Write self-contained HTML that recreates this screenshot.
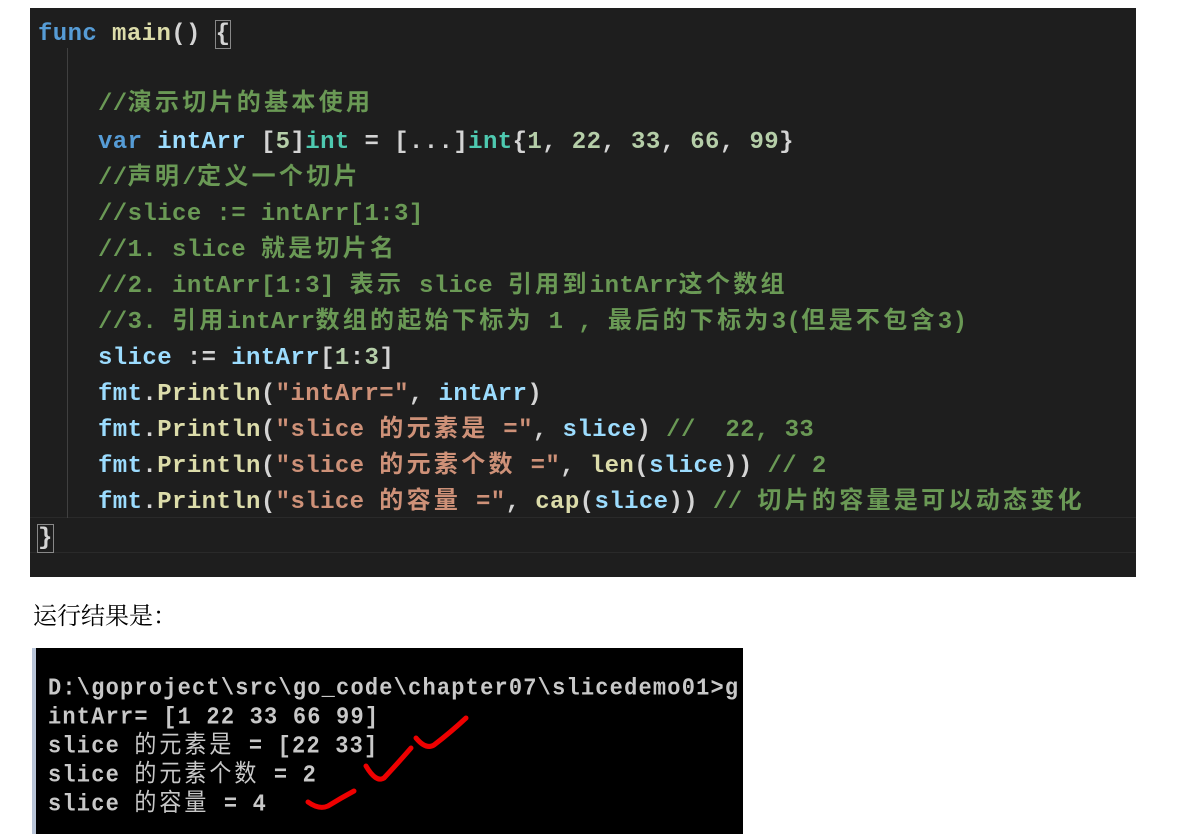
<!DOCTYPE html>
<html><head><meta charset="utf-8"><style>
body{margin:0;background:#fff;width:1183px;height:834px;overflow:hidden;position:relative}
#code{position:absolute;left:30px;top:8px;width:1106px;height:569px;background:#1e1e1e}
.l{position:absolute;white-space:pre;font:bold 24px "Liberation Mono","Noto Sans CJK SC",monospace;letter-spacing:0.4px;color:#d4d4d4;line-height:30px}
.z{letter-spacing:3.3px}
.k{color:#569cd6}.f{color:#dcdcaa}.c{color:#6a9955}.v{color:#9cdcfe}.t{color:#4ec9b0}.n{color:#b5cea8}.s{color:#ce9178}
#term{position:absolute;left:32px;top:648px;width:707px;height:186px;background:#000;border-left:4px solid #b8c4d8}
.m{position:absolute;left:12px;white-space:pre;font:bold 22px "Liberation Mono","Noto Sans CJK SC",monospace;letter-spacing:1.2px;color:#c8c8c8;line-height:26px;transform:scaleY(1.1);transform-origin:left center}
.y{letter-spacing:3px;font-weight:normal}
</style></head><body>
<div id="code">
<div style="position:absolute;left:0;top:509px;width:1106px;height:34px;border-top:1px solid #2a2a2a;border-bottom:1px solid #2a2a2a"></div>
<div style="position:absolute;left:37px;top:40px;width:1px;height:470px;background:#404040"></div>
<div class="l" style="left:8px;top:12px"><span class="k">func</span> <span class="f">main</span>() <span style="outline:1px solid #888">{</span></div>
<div class="l" style="left:68px;top:82px"><span class="c">//<span class="z">演示切片的基本使用</span></span></div>
<div class="l" style="left:68px;top:120px"><span class="k">var</span> <span class="v">intArr</span> [<span class="n">5</span>]<span class="t">int</span> = [...]<span class="t">int</span>{<span class="n">1</span>, <span class="n">22</span>, <span class="n">33</span>, <span class="n">66</span>, <span class="n">99</span>}</div>
<div class="l c" style="left:68px;top:156px">//<span class="z">声明</span>/<span class="z">定义一个切片</span></div>
<div class="l c" style="left:68px;top:192px">//slice := intArr[1:3]</div>
<div class="l c" style="left:68px;top:228px">//1. slice <span class="z">就是切片名</span></div>
<div class="l c" style="left:68px;top:264px">//2. intArr[1:3] <span class="z">表示</span> slice <span class="z">引用到</span>intArr<span class="z">这个数组</span></div>
<div class="l c" style="left:68px;top:300px">//3. <span class="z">引用</span>intArr<span class="z">数组的起始下标为</span> 1 , <span class="z">最后的下标为</span>3(<span class="z">但是不包含</span>3)</div>
<div class="l" style="left:68px;top:336px"><span class="v">slice</span> := <span class="v">intArr</span>[<span class="n">1</span>:<span class="n">3</span>]</div>
<div class="l" style="left:68px;top:372px"><span class="v">fmt</span>.<span class="f">Println</span>(<span class="s">"intArr="</span>, <span class="v">intArr</span>)</div>
<div class="l" style="left:68px;top:408px"><span class="v">fmt</span>.<span class="f">Println</span>(<span class="s">"slice <span class="z">的元素是</span> ="</span>, <span class="v">slice</span>) <span class="c">//  22, 33</span></div>
<div class="l" style="left:68px;top:444px"><span class="v">fmt</span>.<span class="f">Println</span>(<span class="s">"slice <span class="z">的元素个数</span> ="</span>, <span class="f">len</span>(<span class="v">slice</span>)) <span class="c">// 2</span></div>
<div class="l" style="left:68px;top:480px"><span class="v">fmt</span>.<span class="f">Println</span>(<span class="s">"slice <span class="z">的容量</span> ="</span>, <span class="f">cap</span>(<span class="v">slice</span>)) <span class="c">// <span class="z">切片的容量是可以动态变化</span></span></div>
<div class="l" style="left:8px;top:516px"><span style="outline:1px solid #888">}</span></div>
</div>
<div style="position:absolute;left:33px;top:596px;font:24px 'Noto Serif CJK SC',serif;color:#000">运行结果是：</div>
<div id="term">
<div class="m" style="top:28px">D:\goproject\src\go_code\chapter07\slicedemo01>g</div>
<div class="m" style="top:57px">intArr= [1 22 33 66 99]</div>
<div class="m" style="top:86px">slice <span class="y">的元素是</span> = [22 33]</div>
<div class="m" style="top:115px">slice <span class="y">的元素个数</span> = 2</div>
<div class="m" style="top:144px">slice <span class="y">的容量</span> = 4</div>
<svg width="707" height="186" style="position:absolute;left:0;top:0" fill="none" stroke="#e00" stroke-width="5" stroke-linecap="round">
<path d="M380 90 Q390 102 398 97 Q415 84 430 70"/>
<path d="M330 118 Q340 135 348 130 Q362 115 375 100"/>
<path d="M272 154 Q283 162 292 158 Q305 150 318 143"/>
</svg>
</div>
</body></html>
